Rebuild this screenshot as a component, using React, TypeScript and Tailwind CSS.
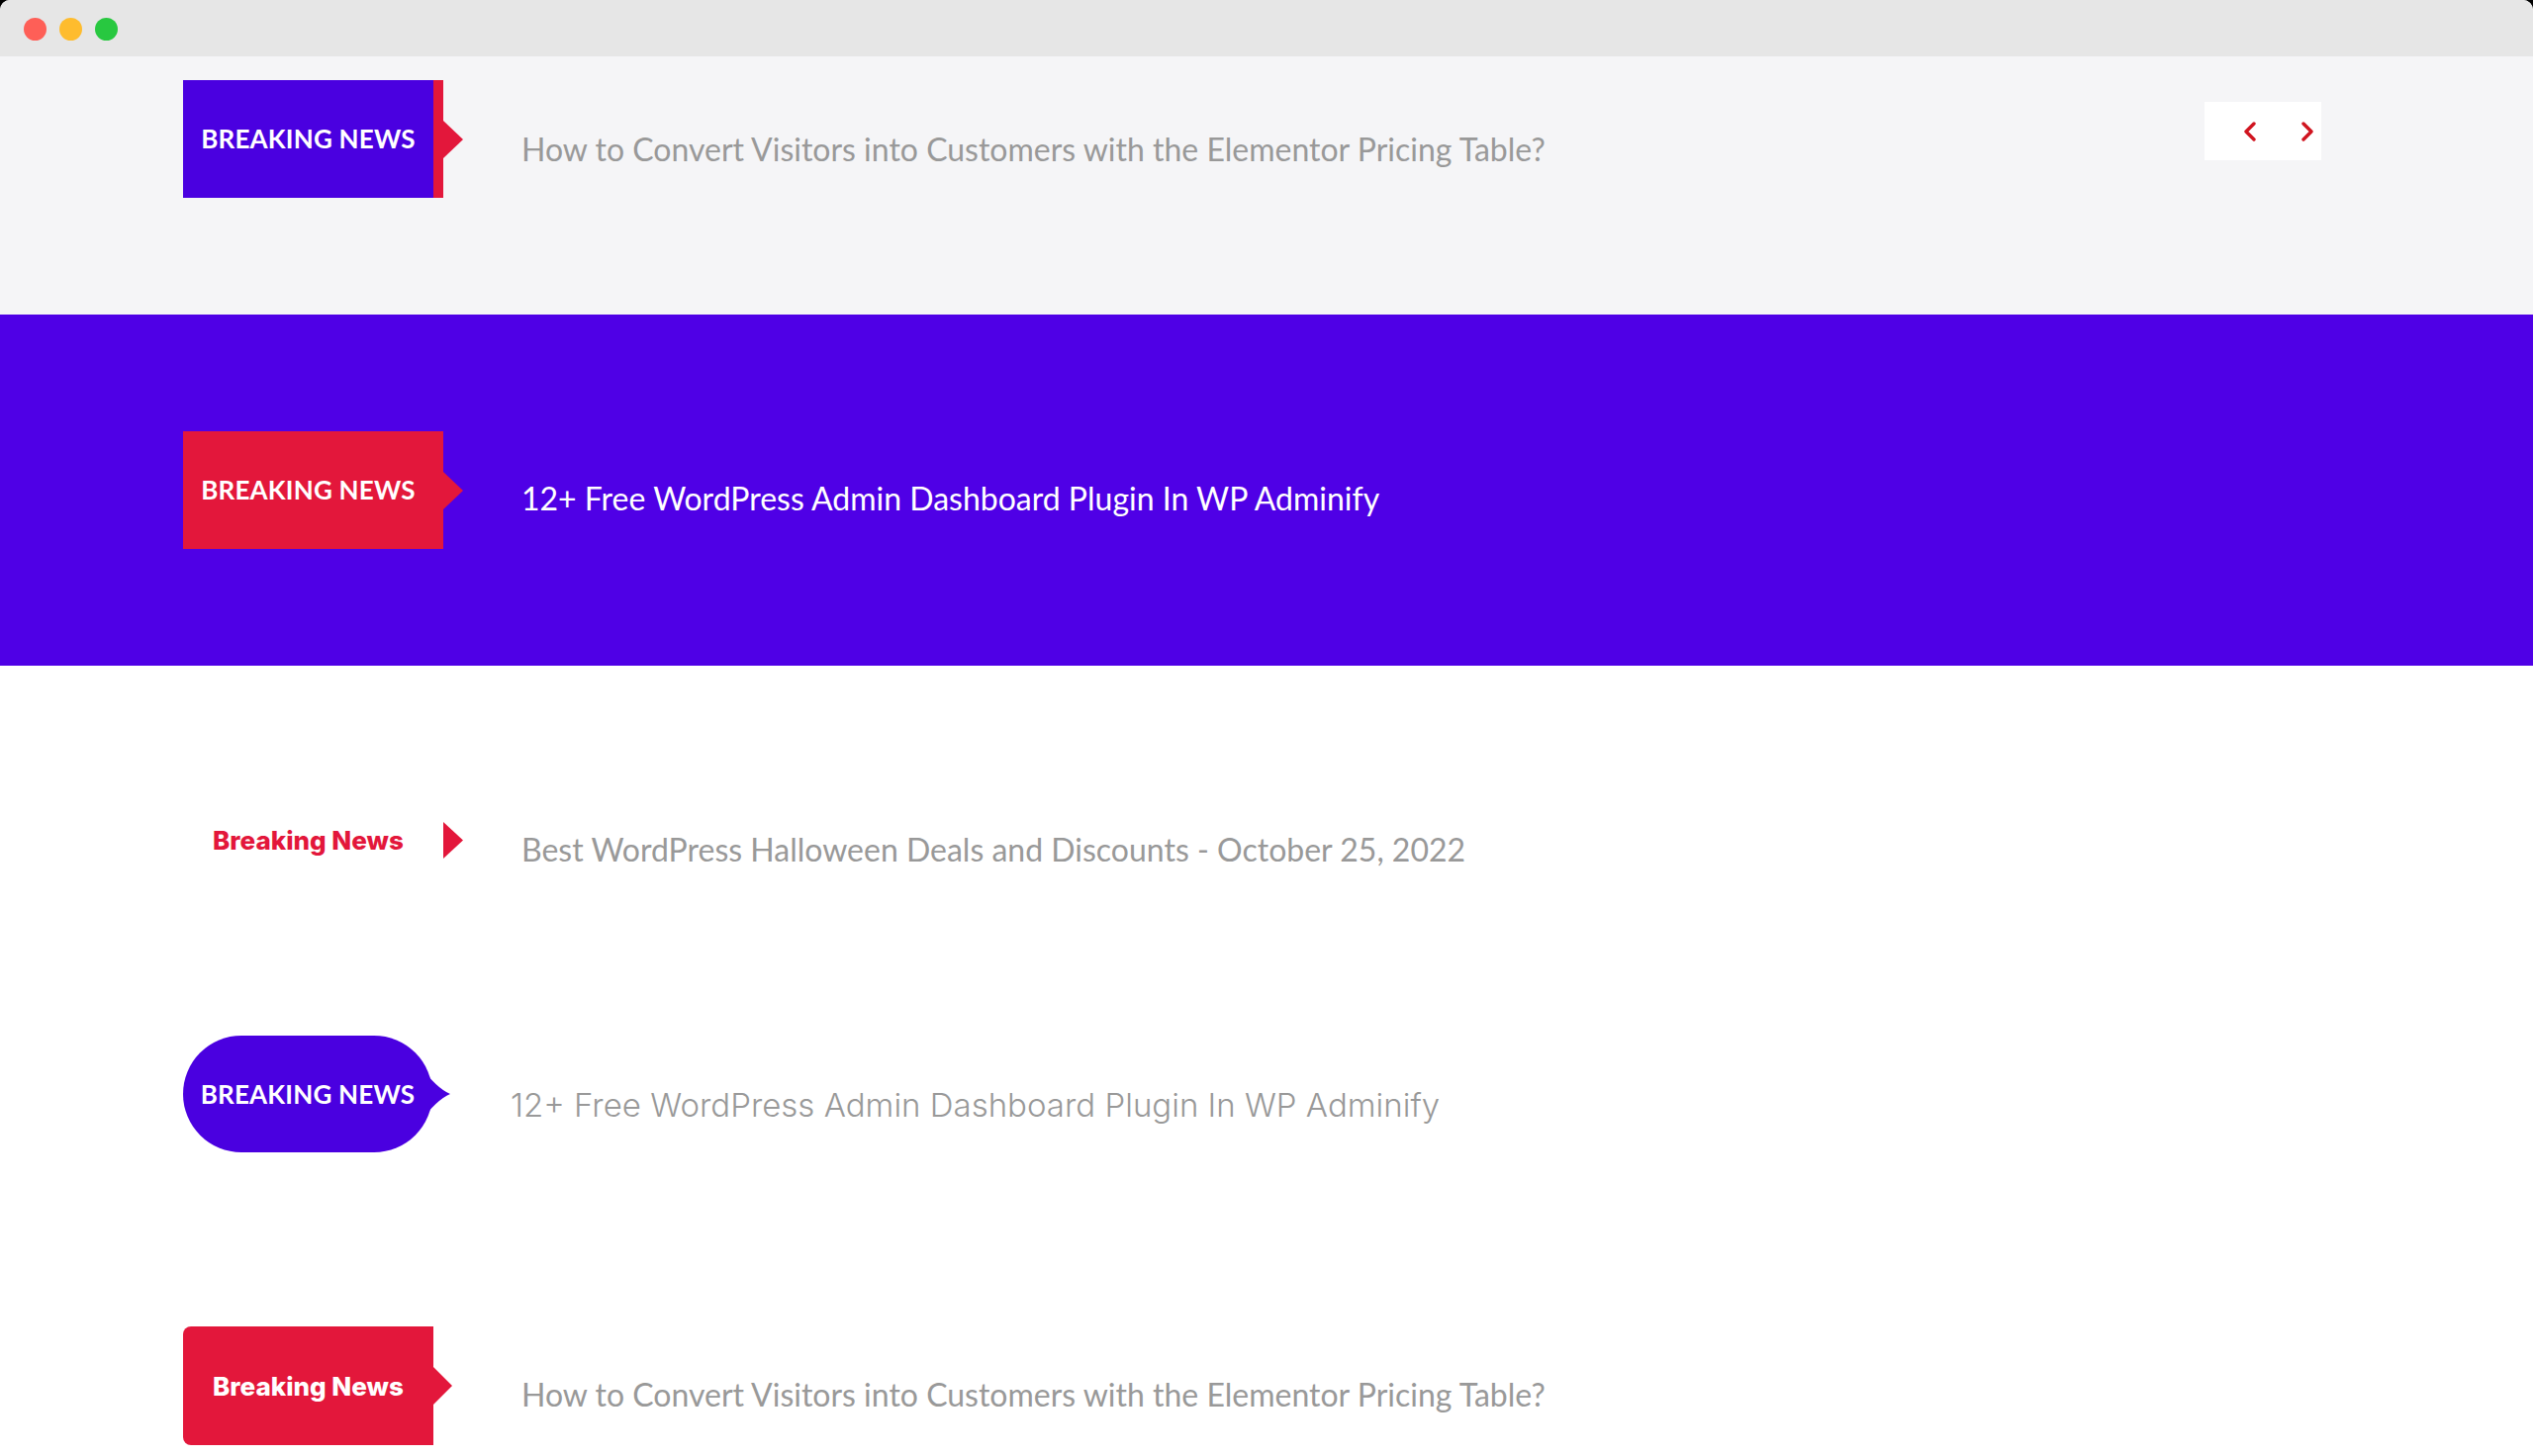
import React from 'react';

const RED = '#e3173b';

const headline = "font-['Lato','Liberation_Sans',sans-serif] text-[32px] leading-[40px] whitespace-nowrap";
const capsLabel = "font-['Lato','Liberation_Sans',sans-serif] font-bold text-[26px] tracking-[0.2px] text-white";
const boldLabel = "font-['Inter','Liberation_Sans',sans-serif] font-extrabold text-[26px]";

function Arrow({ w = 20, h = 38 }: { w?: number; h?: number }) {
  return (
    <svg width={w} height={h} viewBox={`0 0 ${w} ${h}`} className="shrink-0 block">
      <polygon points={`0,0 ${w},${h / 2} 0,${h}`} fill={RED} />
    </svg>
  );
}

function Chevron({ dir }: { dir: 'left' | 'right' }) {
  return (
    <svg width="12" height="20" viewBox="0 0 12 20" className="block">
      <polyline
        points={dir === 'left' ? '10,2 2,10 10,18' : '2,2 10,10 2,18'}
        fill="none"
        stroke="#d0141f"
        strokeWidth="3.4"
        strokeLinecap="round"
        strokeLinejoin="round"
      />
    </svg>
  );
}

function TitleBar() {
  return (
    <div className="h-[57px] bg-[#e6e6e6] rounded-t-[10px] flex items-center gap-[13px] pl-[24px] pt-[2px]">
      <span className="w-[23px] h-[23px] rounded-full bg-[#fe5f57]" />
      <span className="w-[23px] h-[23px] rounded-full bg-[#febc2e]" />
      <span className="w-[23px] h-[23px] rounded-full bg-[#28c840]" />
    </div>
  );
}

export default function App() {
  return (
    <div className="w-[2560px] h-[1472px] overflow-hidden bg-black">
      <div className="h-full bg-white flex flex-col rounded-t-[10px]">
        <TitleBar />

        {/* ticker 1: purple block, red edge, nav buttons */}
        <section className="h-[261px] bg-[#f5f5f7] pl-[185px] pr-[214px] pt-[24px]">
          <div className="flex items-start">
            <div className="w-[342px] flex items-center shrink-0">
              <div className={`w-[263px] h-[119px] bg-[#4a00e0] border-r-[10px] border-[#e3173b] flex items-center justify-center ${capsLabel}`}>
                BREAKING NEWS
              </div>
              <Arrow />
            </div>
            <p className={`${headline} text-[#999999] mt-[50px]`}>
              How to Convert Visitors into Customers with the Elementor Pricing Table?
            </p>
            <div className="ml-auto mt-[22px] w-[118px] h-[59px] bg-white flex items-center pl-[40px] gap-[46px]">
              <Chevron dir="left" />
              <Chevron dir="right" />
            </div>
          </div>
        </section>

        {/* ticker 2: purple band */}
        <section className="h-[355px] bg-[#4f00e6] pl-[185px] flex items-center">
          <div className="w-[342px] flex items-center shrink-0">
            <div className={`w-[263px] h-[119px] bg-[#e3173b] flex items-center justify-center pr-[10px] ${capsLabel}`}>
              BREAKING NEWS
            </div>
            <Arrow />
          </div>
          <p className={`${headline} text-white mt-[17px]`}>
            12+ Free WordPress Admin Dashboard Plugin In WP Adminify
          </p>
        </section>

        {/* ticker 3: text label only */}
        <section className="pl-[185px] pt-[117px] flex items-center">
          <div className="w-[342px] h-[119px] flex items-center shrink-0">
            <div className={`w-[263px] flex items-center justify-center pr-[10px] text-[#e3173b] ${boldLabel}`}>
              Breaking News
            </div>
            <Arrow w={20} h={37} />
          </div>
          <p className={`${headline} text-[#999999] mt-[19px]`}>
            Best WordPress Halloween Deals and Discounts - October 25, 2022
          </p>
        </section>

        {/* ticker 4: pill bubble */}
        <section className="pl-[185px] pt-[138px] flex items-center">
          <div className="w-[331px] flex items-center shrink-0">
            <div className={`relative w-[252px] h-[118px] rounded-full bg-[#4a00e0] flex items-center justify-center ${capsLabel}`}>
              BREAKING NEWS
              <svg width="30" height="56" viewBox="0 0 30 56" className="absolute left-[240px] top-[31px]">
                <path d="M0 0 Q16 22 30 28 Q16 34 0 56 Z" fill="#4a00e0" />
              </svg>
            </div>
          </div>
          <p className="font-['Inter','Liberation_Sans',sans-serif] font-light text-[33px] leading-[40px] whitespace-nowrap text-[#999999] mt-[22px]">
            12+ Free WordPress Admin Dashboard Plugin In WP Adminify
          </p>
        </section>

        {/* ticker 5: rounded red tab */}
        <section className="pl-[185px] pt-[176px] flex items-center">
          <div className="w-[342px] flex items-center shrink-0">
            <div className={`w-[253px] h-[120px] rounded-l-[8px] bg-[#e3173b] flex items-center justify-center text-white ${boldLabel}`}>
              Breaking News
            </div>
            <Arrow w={19} h={38} />
          </div>
          <p className={`${headline} text-[#999999] mt-[18px]`}>
            How to Convert Visitors into Customers with the Elementor Pricing Table?
          </p>
        </section>
      </div>
    </div>
  );
}
